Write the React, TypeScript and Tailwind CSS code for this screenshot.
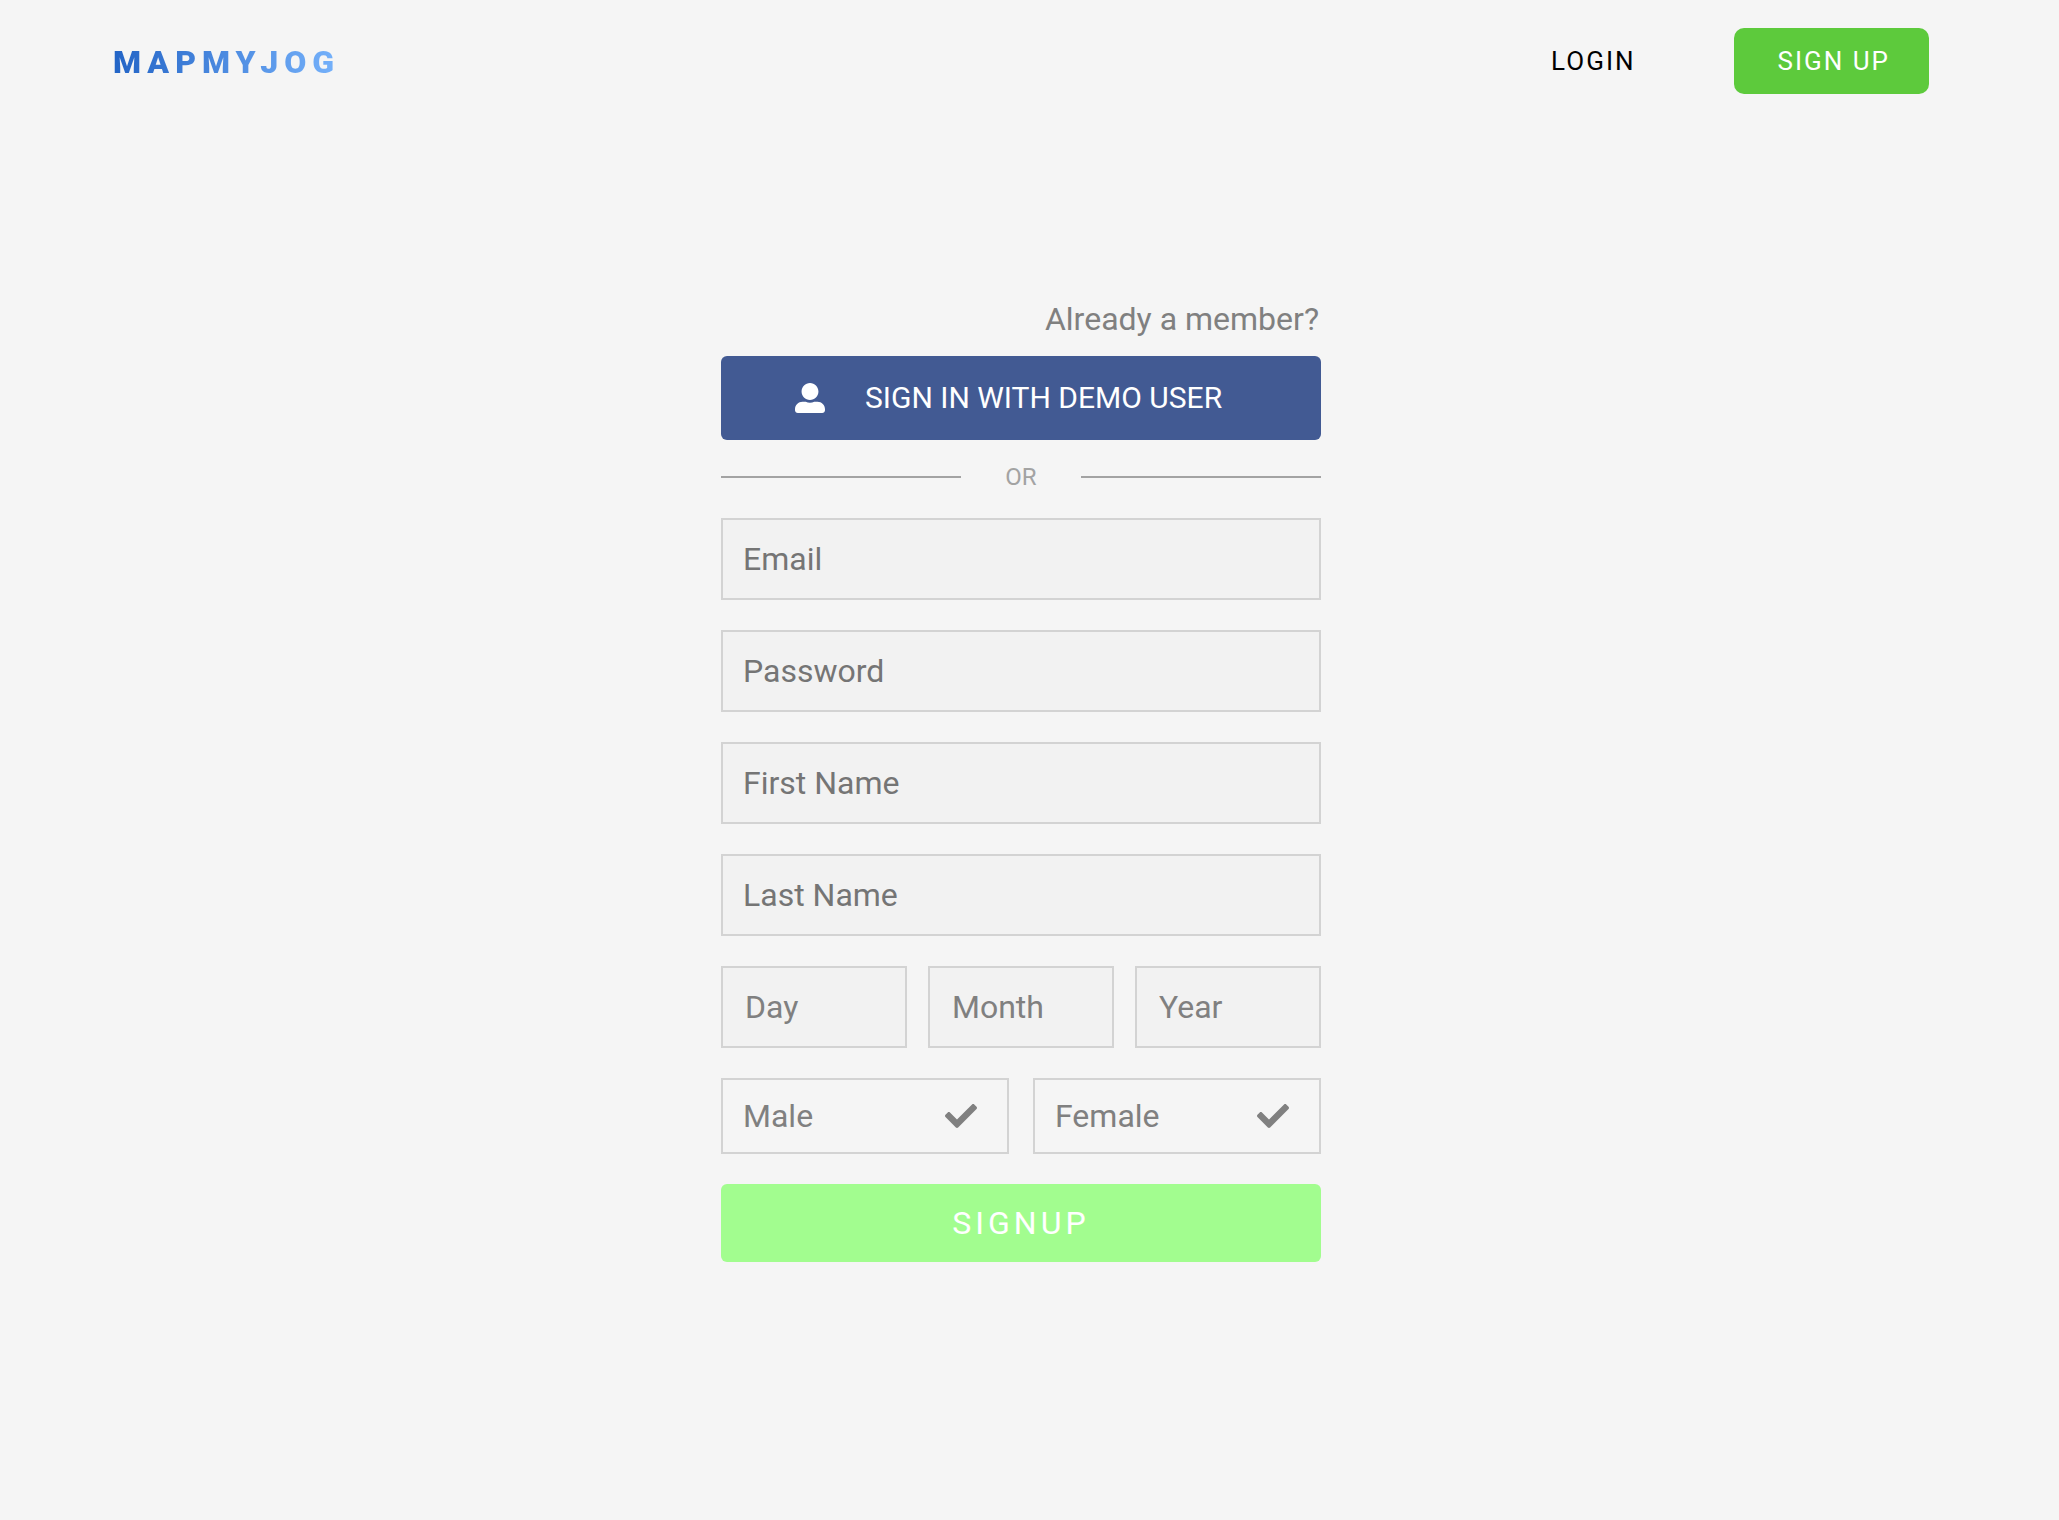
import { FaCheck, FaUserAlt } from "react-icons/fa";

const textFields = [
  { id: "email", label: "Email", type: "email" },
  { id: "password", label: "Password", type: "password" },
  { id: "first-name", label: "First Name", type: "text" },
  { id: "last-name", label: "Last Name", type: "text" },
];

const birthFields = [
  { id: "day", label: "Day" },
  { id: "month", label: "Month" },
  { id: "year", label: "Year" },
];

const genders = [
  { id: "male", label: "Male" },
  { id: "female", label: "Female" },
];

function Header() {
  return (
    <header className="flex items-center justify-between px-[113px] py-7">
      <a
        href="#home"
        className="bg-linear-to-r from-[#2264c6] to-[#76b2fb] bg-clip-text pt-0.5 text-[32px] leading-10 font-black tracking-[6px] text-transparent"
      >
        MAPMYJOG
      </a>
      <nav className="flex items-center gap-[98px] text-[26px] leading-[30px] tracking-[2px]">
        <a href="#login" className="text-black">
          LOGIN
        </a>
        <a
          href="#signup"
          className="rounded-[10px] bg-[#5dca3c] py-[18px] pr-[39px] pl-11 text-white"
        >
          SIGN UP
        </a>
      </nav>
    </header>
  );
}

function Divider() {
  return (
    <div className="mt-5 mb-6 flex items-center text-[#a3a3a3]">
      <span className="h-0.5 flex-1 bg-[#a3a3a3]" />
      <span className="w-30 text-center text-2xl leading-[34px]">OR</span>
      <span className="h-0.5 flex-1 bg-[#a3a3a3]" />
    </div>
  );
}

export default function App() {
  return (
    <div className="min-h-screen bg-[#f5f5f5] pr-[17px] font-[Roboto,sans-serif]">
      <Header />
      <main className="mx-auto max-w-[600px] pt-[178px] text-[32px] leading-[38px] text-[#808080]">
        <p className="mb-[18px] pr-0.5 text-right">
          <a href="#login">Already a member?</a>
        </p>
        <button
          type="button"
          className="flex h-21 w-full items-center gap-10 rounded-md bg-[#425a93] pl-[74px] text-[30px] text-white"
        >
          <FaUserAlt aria-hidden="true" />
          SIGN IN WITH DEMO USER
        </button>
        <Divider />
        <form className="flex flex-col gap-[30px]">
          {textFields.map((field) => (
            <input
              key={field.id}
              id={field.id}
              type={field.type}
              placeholder={field.label}
              aria-label={field.label}
              className="h-[82px] w-full border-2 border-[#d3d3d3] bg-[#f2f2f2] px-5 placeholder:text-[#757575]"
            />
          ))}
          <div className="grid grid-cols-3 gap-[21px]">
            {birthFields.map((field) => (
              <select
                key={field.id}
                id={field.id}
                aria-label={field.label}
                className="h-[82px] w-full appearance-none border-2 border-[#d3d3d3] bg-[#f2f2f2] px-[22px]"
              >
                <option>{field.label}</option>
              </select>
            ))}
          </div>
          <div className="grid grid-cols-2 gap-6">
            {genders.map((gender) => (
              <label
                key={gender.id}
                htmlFor={gender.id}
                className="flex h-19 items-center justify-between border-2 border-[#d3d3d3] pr-[30px] pl-5"
              >
                <input
                  id={gender.id}
                  type="radio"
                  name="gender"
                  value={gender.id}
                  className="sr-only"
                />
                {gender.label}
                <FaCheck aria-hidden="true" />
              </label>
            ))}
          </div>
          <button
            type="submit"
            className="h-[78px] w-full rounded-md bg-[#a2fd8f] tracking-[4px] text-white"
          >
            SIGNUP
          </button>
        </form>
      </main>
    </div>
  );
}
